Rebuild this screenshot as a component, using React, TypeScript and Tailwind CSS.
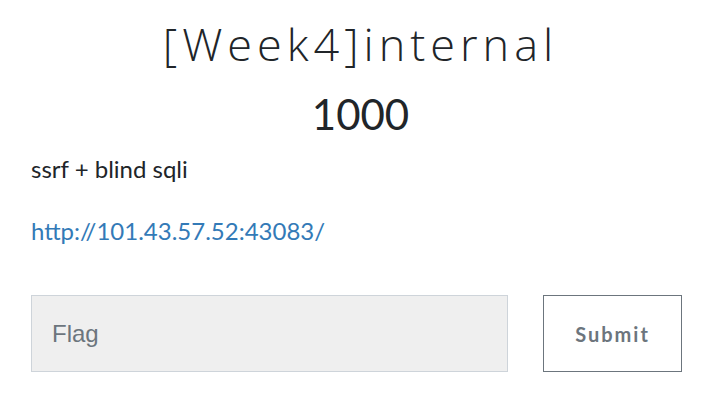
export default function App() {
  return (
    <div className="w-[721px] h-[416px] bg-white" style={{ fontFamily: "Lato, 'Open Sans', sans-serif" }}>
      <div className="pt-[16px] px-[31px]">
        <h3
          className="text-center text-[45px] leading-[56px] font-light tracking-[5px] text-[#212529]"
          style={{ fontFamily: "'Open Sans', Lato, sans-serif" }}
        >
          [Week4]internal
        </h3>
        <h4 className="text-center text-[42px] leading-[56px] font-normal text-[#212529] mt-[14px]">1000</h4>
        <p className="mt-[10px] text-[24px] leading-[34px] text-[#212529]">ssrf + blind sqli</p>
        <p className="mt-[28px] text-[24px] leading-[34px]">
          <a className="text-[#337ab7]" href="#">http://101.43.57.52:43083/</a>
        </p>
        <div className="mt-[47px] flex">
          <input
            placeholder="Flag"
            className="w-[477px] h-[77px] bg-[#efefef] border border-[#ced4da] pl-[20px] text-[24px] placeholder:text-[#6c757d] outline-none"
            style={{ fontFamily: "'Liberation Sans', Arial, sans-serif" }}
          />
          <button className="ml-[35px] w-[139px] h-[77px] border border-[#6c757d] text-[#6c757d] font-bold text-[20px] tracking-[2px] bg-white">
            Submit
          </button>
        </div>
      </div>
    </div>
  );
}
